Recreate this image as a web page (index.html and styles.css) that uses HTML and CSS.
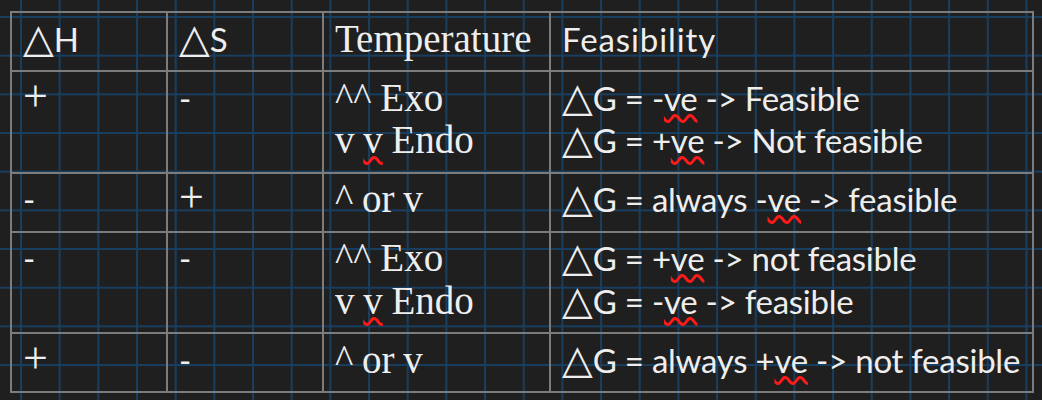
FILE: index.html
```html
<!DOCTYPE html>
<html>
<head>
<meta charset="utf-8">
<link rel="stylesheet" href="styles.css">
</head>
<body>
<table class="chem">
  <colgroup><col class="c1"><col class="c2"><col class="c3"><col class="c4"></colgroup>
  <tr>
    <td class="sans"><span class="tri">△</span>H</td>
    <td class="sans"><span class="tri">△</span>S</td>
    <td class="serif">Temperature</td>
    <td class="sans wide">Feasibility</td>
  </tr>
  <tr>
    <td class="sans"><span class="plus">+</span></td>
    <td class="sans">-</td>
    <td class="serif"><div>^^ Exo</div><div>v <span class="sp">v</span> Endo</div></td>
    <td class="sans"><div><span class="tri">△</span>G = -<span class="sp">ve</span> -&gt; Feasible</div><div><span class="tri">△</span>G = +<span class="sp">ve</span> -&gt; Not feasible</div></td>
  </tr>
  <tr>
    <td class="sans">-</td>
    <td class="sans"><span class="plus">+</span></td>
    <td class="serif">^ or v</td>
    <td class="sans"><span class="tri">△</span>G = always -<span class="sp">ve</span> -&gt; feasible</td>
  </tr>
  <tr>
    <td class="sans">-</td>
    <td class="sans">-</td>
    <td class="serif"><div>^^ Exo</div><div>v <span class="sp">v</span> Endo</div></td>
    <td class="sans"><div><span class="tri">△</span>G = +<span class="sp">ve</span> -&gt; not feasible</div><div><span class="tri">△</span>G = -<span class="sp">ve</span> -&gt; feasible</div></td>
  </tr>
  <tr>
    <td class="sans"><span class="plus">+</span></td>
    <td class="sans">-</td>
    <td class="serif">^ or v</td>
    <td class="sans"><span class="tri">△</span>G = always +<span class="sp">ve</span> -&gt; not feasible</td>
  </tr>
</table>
</body>
</html>
```
FILE: styles.css
```css
html, body {
  margin: 0;
  padding: 0;
}
body {
  width: 1042px;
  height: 400px;
  overflow: hidden;
  background-color: #1f1f1f;
  background-image:
    linear-gradient(to right, #183e60 0, #183e60 2px, transparent 2px),
    linear-gradient(to bottom, #183e60 0, #183e60 2px, transparent 2px);
  background-size: 38.68px 38.68px;
  background-position: 20px 16px;
  color: #eeeeee;
}
.chem {
  border-collapse: collapse;
  table-layout: fixed;
  width: 1022px;
  margin: 11px 0 0 10px;
}
.c1 { width: 156px; }
.c2 { width: 156px; }
.c3 { width: 227px; }
.c4 { width: 483px; }
.chem td {
  border: 2px solid #7c7c7c;
  vertical-align: top;
  padding: 4.5px 8px 10px 11px;
  line-height: 42.5px;
  white-space: nowrap;
}
.sans {
  font-family: Lato, "DejaVu Sans", sans-serif;
  font-size: 33px;
  letter-spacing: -0.25px;
}
.wide {
  letter-spacing: 0.9px;
}
.serif {
  font-family: "Liberation Serif", serif;
  font-size: 39px;
  word-spacing: -1px;
}
.tri {
  font-family: "DejaVu Sans", sans-serif;
  font-size: 40px;
  line-height: 0;
  letter-spacing: 0;
}
.plus {
  font-family: "Liberation Serif", serif;
  font-size: 44px;
  line-height: 0;
}
.sp {
  text-decoration: underline wavy #ff1a1a;
  text-decoration-thickness: 2.5px;
  text-underline-offset: 3px;
}
```
